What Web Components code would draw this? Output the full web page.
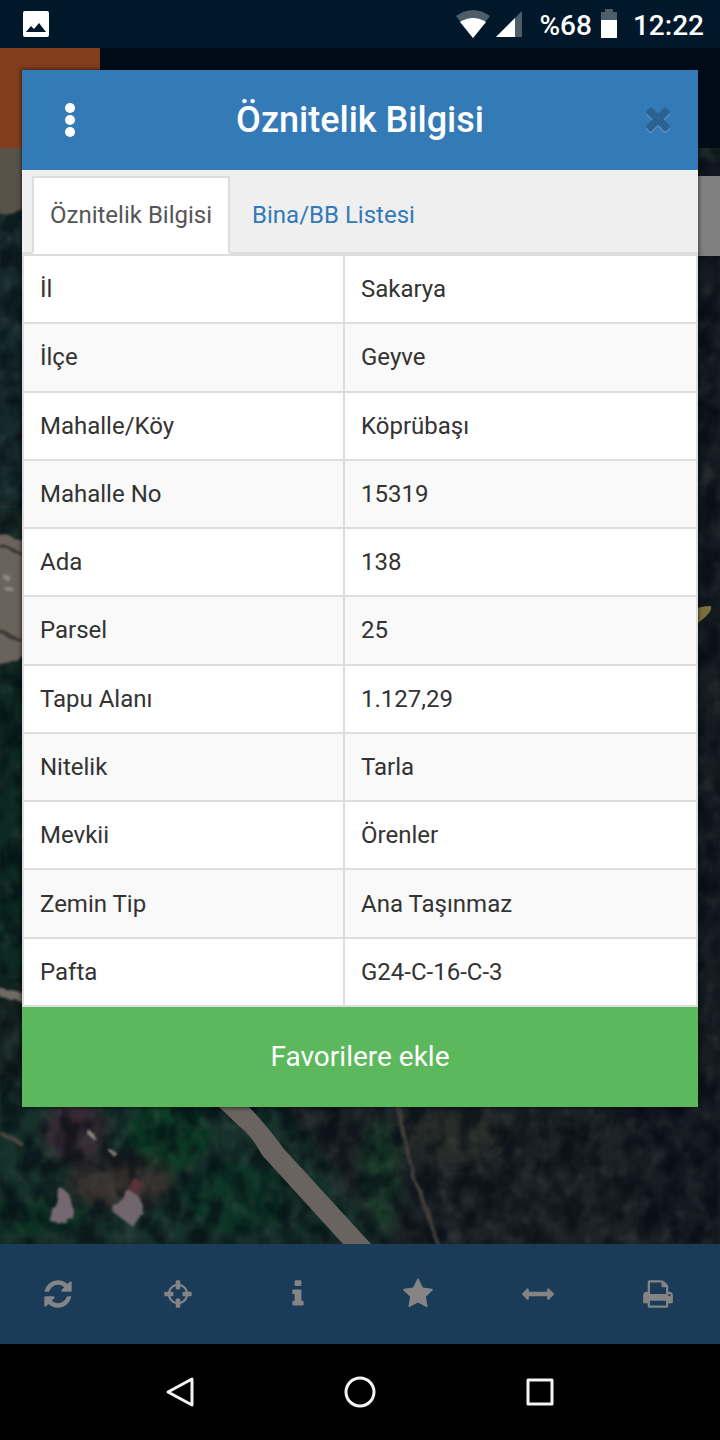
<!DOCTYPE html>
<html lang="tr">
<head>
<meta charset="utf-8">
<meta name="viewport" content="width=device-width, initial-scale=1">
<title>Parsel Sorgu</title>
<style>
  html, body { margin: 0; }
  body { font-family: Roboto, "Noto Sans", sans-serif; background: #000; }
</style>
</head>
<body>
<parcel-screen>
  <status-bar slot="status"></status-bar>
  <app-header slot="header"></app-header>
  <satellite-map slot="map"></satellite-map>
  <tool-bar slot="tools"></tool-bar>
  <system-nav slot="nav"></system-nav>
  <info-dialog slot="dialog" heading="Öznitelik Bilgisi">
    <tab-strip></tab-strip>
    <attribute-table></attribute-table>
    <favorite-button>Favorilere ekle</favorite-button>
  </info-dialog>
</parcel-screen>

<script>
const define = (name, html, setup) => {
  const template = document.createElement('template');
  template.innerHTML = html;
  customElements.define(name, class extends HTMLElement {
    constructor() {
      super();
      this.attachShadow({ mode: 'open' }).append(template.content.cloneNode(true));
    }
    connectedCallback() { if (setup) setup(this, this.shadowRoot); }
  });
};

/* Icon outlines on a 1792-unit square */
const ICONS = {
  refresh: 'M1639 1056q0 5-1 7-64 268-268 434.5t-478 166.5q-146 0-282.5-55t-243.5-157l-129 129q-19 19-45 19t-45-19-19-45v-448q0-26 19-45t45-19h448q26 0 45 19t19 45-19 45l-137 137q71 66 161 102t187 36q134 0 250-65t186-179q11-17 53-117 8-23 30-23h192q13 0 22.5 9.5t9.5 22.5zm25-800v448q0 26-19 45t-45 19h-448q-26 0-45-19t-19-45 19-45l138-138q-148-137-349-137-134 0-250 65t-186 179q-11 17-53 117-8 23-30 23h-199q-13 0-22.5-9.5t-9.5-22.5v-7q65-268 270-434.5t480-166.5q146 0 284 55.5t245 156.5l130-129q19-19 45-19t45 19 19 45z',
  crosshairs: 'M1325 1024h-109q-26 0-45-19t-19-45v-128q0-26 19-45t45-19h109q-32-108-112.5-188.5t-188.5-112.5v109q0 26-19 45t-45 19h-128q-26 0-45-19t-19-45v-109q-108 32-188.5 112.5t-112.5 188.5h109q26 0 45 19t19 45v128q0 26-19 45t-45 19h-109q32 108 112.5 188.5t188.5 112.5v-109q0-26 19-45t45-19h128q26 0 45 19t19 45v109q108-32 188.5-112.5t112.5-188.5zm339-192v128q0 26-19 45t-45 19h-143q-37 161-154.5 278.5t-278.5 154.5v143q0 26-19 45t-45 19h-128q-26 0-45-19t-19-45v-143q-161-37-278.5-154.5t-154.5-278.5h-143q-26 0-45-19t-19-45v-128q0-26 19-45t45-19h143q37-161 154.5-278.5t278.5-154.5v-143q0-26 19-45t45-19h128q26 0 45 19t19 45v143q161 37 278.5 154.5t154.5 278.5h143q26 0 45 19t19 45z',
  info: 'M1216 1344v128q0 26-19 45t-45 19h-512q-26 0-45-19t-19-45v-128q0-26 19-45t45-19h64v-384h-64q-26 0-45-19t-19-45v-128q0-26 19-45t45-19h384q26 0 45 19t19 45v576h64q26 0 45 19t19 45zm-128-1152v192q0 26-19 45t-45 19h-256q-26 0-45-19t-19-45v-192q0-26 19-45t45-19h256q26 0 45 19t19 45z',
  star: 'M1728 647q0 22-26 48l-363 354 86 500q1 7 1 20 0 21-10.5 35.5t-30.5 14.5q-19 0-40-12l-449-236-449 236q-22 12-40 12-21 0-31.5-14.5t-10.5-35.5q0-6 2-20l86-500-364-354q-25-27-25-48 0-37 56-46l502-73 225-455q19-41 49-41t49 41l225 455 502 73q56 9 56 46z',
  measure: 'M1792 896q0 26-19 45l-256 256q-19 19-45 19t-45-19-19-45v-128h-1024v128q0 26-19 45t-45 19-45-19l-256-256q-19-19-19-45t19-45l256-256q19-19 45-19t45 19 19 45v128h1024v-128q0-26 19-45t45-19 45 19l256 256q19 19 19 45z',
  print: 'M448 1536h896v-256h-896v256zm0-640h896v-384h-160q-40 0-68-28t-28-68v-160h-640v640zm1152 64q0-26-19-45t-45-19-45 19-19 45 19 45 45 19 45-19 19-45zm128 0v416q0 13-9.5 22.5t-22.5 9.5h-224v160q0 40-28 68t-68 28h-960q-40 0-68-28t-28-68v-160h-224q-13 0-22.5-9.5t-9.5-22.5v-416q0-79 56.5-135.5t135.5-56.5h64v-544q0-40 28-68t68-28h672q40 0 88 20t76 48l152 152q28 28 48 76t20 88v256h64q79 0 135.5 56.5t56.5 135.5z',
  times: 'M1490 1322q0 40-28 68l-136 136q-28 28-68 28t-68-28l-294-294-294 294q-28 28-68 28t-68-28l-136-136q-28-28-28-68t28-68l294-294-294-294q-28-28-28-68t28-68l136-136q28-28 68-28t68 28l294 294 294-294q28-28 68-28t68 28l136 136q28 28 28 68t-28 68l-294 294 294 294q28 28 28 68z'
};

define('glyph-icon', `
  <style>
    :host { display: block; width: 32px; height: 32px; }
    svg { display: block; width: 100%; height: 100%; overflow: visible; }
  </style>
  <svg viewBox="0 0 1792 1792" fill="currentColor" aria-hidden="true"><path/></svg>`,
  (el, root) => root.querySelector('path').setAttribute('d', ICONS[el.getAttribute('name')]));

define('parcel-screen', `
  <style>
    :host { display: grid; grid-template-rows: 48px 100px 1fr 100px 96px; position: relative; min-height: 100vh; }
    .overlay { position: absolute; top: 70px; left: 22px; right: 22px; }
  </style>
  <slot name="status"></slot>
  <slot name="header"></slot>
  <slot name="map"></slot>
  <slot name="tools"></slot>
  <slot name="nav"></slot>
  <div class="overlay"><slot name="dialog"></slot></div>`);

define('status-bar', `
  <style>
    :host { display: flex; align-items: center; padding: 0 16px 0 22px; background: #00182a; color: #fff; font-size: 28px; font-weight: 500; line-height: 32px; }
    svg { display: block; flex: none; }
    span, time { padding-top: 4px; }
    .fill { flex: 1; }
    .signal { margin: 0 18px 0 6px; }
    .battery { margin: 0 16px 0 9px; }
  </style>
  <svg width="28" height="28" viewBox="0 0 28 28"><rect x="1" y="1" width="26" height="26" rx="2" fill="#fff"/><path d="M4 22l5-6 3 3 5-6 7 9z" fill="#00182a"/></svg>
  <span class="fill"></span>
  <svg width="34" height="30" viewBox="0 0 34 30"><path d="M0 7Q17-5 34 7L17 29z" fill="#4d5d6a"/><path d="M4 13Q17 5 30 13L17 29z" fill="#fff"/></svg>
  <svg class="signal" width="26" height="28" viewBox="0 0 26 28"><path d="M26 1V27H0z" fill="#4d5d6a"/><path d="M19 8V27H0z" fill="#fff"/></svg>
  <span>%68</span>
  <svg class="battery" width="16" height="30" viewBox="0 0 16 30"><path d="M0 3h4V0h8v3h4v8H0z" fill="#4d5d6a"/><path d="M0 11h16v18H0z" fill="#fff"/></svg>
  <time>12:22</time>`);

define('app-header', `
  <style>
    :host { display: flex; background: #000d18; }
    .brand { width: 100px; background: #843d1d; }
  </style>
  <div class="brand"></div>`);

define('satellite-map', `
  <style>
    :host { display: grid; position: relative; overflow: hidden; background: #10201f; min-height: 1096px; }
    svg { display: block; width: 100%; height: 100%; }
    button { position: absolute; top: 28px; right: 0; width: 80px; height: 80px; border: 0; background: #808080; }
  </style>
  <svg viewBox="0 0 720 1096" preserveAspectRatio="xMidYMid slice" aria-hidden="true">
    <defs>
      <filter id="soft" x="-30%" y="-30%" width="160%" height="160%"><feGaussianBlur stdDeviation="7"/></filter>
      <filter id="edge" x="-30%" y="-30%" width="160%" height="160%">
        <feTurbulence type="fractalNoise" baseFrequency=".08" numOctaves="2" seed="4" result="n"/>
        <feDisplacementMap in="SourceGraphic" in2="n" scale="10"/><feGaussianBlur stdDeviation="1"/>
      </filter>
      <filter id="shade" x="0" y="0" width="100%" height="100%" color-interpolation-filters="sRGB">
        <feTurbulence type="fractalNoise" baseFrequency=".05 .04" numOctaves="3" seed="8"/>
        <feColorMatrix values="0 0 0 0 0  0 0 0 0 .03  0 0 0 0 .06  3 0 0 0 -1.1"/>
        <feGaussianBlur stdDeviation="1"/>
      </filter>
      <filter id="leaf" x="0" y="0" width="100%" height="100%" color-interpolation-filters="sRGB">
        <feTurbulence type="fractalNoise" baseFrequency=".08 .06" numOctaves="3" seed="21"/>
        <feColorMatrix values="0 0 0 0 .28  0 0 0 0 .32  0 0 0 0 .32  0 3 0 0 -1.4"/>
        <feGaussianBlur stdDeviation="1"/>
      </filter>
    </defs>
    <rect width="720" height="1096" fill="#172824"/>
    <g filter="url(#soft)">
      <rect x="-20" y="75" width="60" height="280" fill="#152b2d"/>
      <rect x="-20" y="530" width="60" height="300" fill="#0d2b20"/>
      <path d="M-20 940h290l110 160H-20z" fill="#14332a"/>
      <path d="M270 940h450v160H390z" fill="#1d2225"/>
      <path d="M600 0h130v1096H640z" fill="#131a21"/>
      <ellipse cx="75" cy="985" rx="30" ry="30" fill="#382b34"/>
      <ellipse cx="120" cy="1035" rx="50" ry="26" fill="#37332f"/>
      <ellipse cx="170" cy="985" rx="40" ry="34" fill="#0f3d28"/>
      <ellipse cx="235" cy="1050" rx="50" ry="36" fill="#0d3625"/>
      <ellipse cx="25" cy="1070" rx="60" ry="16" fill="#0e3124"/>
      <ellipse cx="380" cy="1030" rx="18" ry="60" fill="#1a3c2b"/>
      <ellipse cx="455" cy="985" rx="50" ry="30" fill="#2b2e2a"/>
    </g>
    <rect width="720" height="1096" filter="url(#leaf)" opacity=".3"/>
    <rect width="720" height="1096" filter="url(#shade)" opacity=".6"/>
    <g filter="url(#edge)">
      <path d="M-20-20h60v55l-18 28-42 10z" fill="#595349"/>
      <path d="M-20 382l60 14v112l-60 12z" fill="#6b635b"/>
      <path d="M0 398l24 8M0 484l24 10" stroke="#3b3834" stroke-width="4"/>
      <path d="M3 428l8 4M5 440l8 2" stroke="#8d8881" stroke-width="4"/>
      <path d="M0 844l30 8" stroke="#716b62" stroke-width="9"/>
      <path d="M398 955q8 60 26 100l14 44" stroke="#403d39" stroke-width="4" fill="none"/>
      <path d="M0 984l22 12" stroke="#4b4641" stroke-width="4"/>
      <path d="M50 1074l2-13 8-22 10 8 4 16-14 14z" fill="#746870"/>
      <path d="M112 1063l16-20 10 4 4 18-9 14z" fill="#71666c"/>
      <path d="M129 1042l7-12 8 6-6 12z" fill="#593138"/>
      <path d="M88 984l8 7M112 1004l4 3" stroke="#8b877f" stroke-width="4"/>
    </g>
    <path d="M218 958L248 958Q264 974 284 1001L371 1096H343L262 1007Q252 988 239 978z" fill="#69645f"/>
    <path d="M690 463q10-5 21-5 1 4-3 8-7 8-18 14z" fill="#78713f"/>
  </svg>
  <button type="button" aria-label="Katmanlar"></button>`);

define('tool-bar', `
  <style>
    :host { display: grid; grid-template-columns: repeat(6, 1fr); background: #1b3c59; }
    button { display: grid; place-items: center; border: 0; background: none; color: #848484; padding: 0 4px 0 0; }
  </style>
  <button type="button" aria-label="Yenile"><glyph-icon name="refresh"></glyph-icon></button>
  <button type="button" aria-label="Konum"><glyph-icon name="crosshairs"></glyph-icon></button>
  <button type="button" aria-label="Bilgi"><glyph-icon name="info"></glyph-icon></button>
  <button type="button" aria-label="Favoriler"><glyph-icon name="star"></glyph-icon></button>
  <button type="button" aria-label="Ölçüm"><glyph-icon name="measure"></glyph-icon></button>
  <button type="button" aria-label="Yazdır"><glyph-icon name="print"></glyph-icon></button>`);

define('system-nav', `
  <style>
    :host { display: grid; grid-template-columns: repeat(3, 25%); justify-content: center; background: #000; }
    button { display: grid; place-items: center; border: 0; padding: 0; background: none; }
    svg { display: block; fill: none; stroke: #f4f4f4; stroke-width: 3; stroke-linejoin: round; }
  </style>
  <button type="button" aria-label="Geri"><svg width="32" height="32" viewBox="0 0 32 32"><path d="M28 3v26L4 16z"/></svg></button>
  <button type="button" aria-label="Ana ekran"><svg width="32" height="32" viewBox="0 0 32 32"><circle cx="16" cy="16" r="14"/></svg></button>
  <button type="button" aria-label="Son uygulamalar"><svg width="32" height="32" viewBox="0 0 32 32"><rect x="4" y="4" width="24" height="24"/></svg></button>`);

define('info-dialog', `
  <style>
    :host { display: block; background: #fff; box-shadow: 0 0 4px 1px rgba(0, 0, 0, .5); }
    header { display: grid; grid-template-columns: 96px 1fr 96px; align-items: center; height: 100px; background: #347ab7; color: #fff; }
    h1 { margin: 0; font-size: 36px; font-weight: 500; line-height: 48px; text-align: center; }
    button { display: grid; place-items: center; height: 64px; border: 0; padding: 0; background: none; color: #fff; }
    .close { padding: 0 0 4px 16px; color: #2a6292; }
    .close glyph-icon { width: 36px; height: 36px; filter: drop-shadow(0 2px 0 #5590c3); }
  </style>
  <section role="dialog" aria-labelledby="heading">
    <header>
      <button type="button" aria-label="Menü"><svg width="12" height="36" viewBox="0 0 12 36" fill="#fff"><circle cx="6" cy="6" r="5"/><circle cx="6" cy="18" r="5"/><circle cx="6" cy="30" r="5"/></svg></button>
      <h1 id="heading"></h1>
      <button type="button" class="close" aria-label="Kapat"><glyph-icon name="times"></glyph-icon></button>
    </header>
    <slot></slot>
  </section>`,
  (el, root) => { root.querySelector('h1').textContent = el.getAttribute('heading'); });

define('tab-strip', `
  <style>
    :host { display: block; background: #efefef; }
    nav { display: flex; gap: 4px; padding: 6px 10px 0; border-bottom: 2px solid #ddd; }
    a { box-sizing: border-box; height: 76px; padding: 20px 16px; border: 2px solid transparent; color: #337ab7; font-size: 24px; line-height: 34px; text-decoration: none; }
    a[aria-current] { height: 78px; margin-bottom: -2px; background: #fff; border-color: #ddd #ddd #fff; color: #555; }
  </style>
  <nav><a href="#oznitelik" aria-current="page">Öznitelik Bilgisi</a><a href="#bina">Bina/BB Listesi</a></nav>`);

const ROWS = [
  ['İl', 'Sakarya'], ['İlçe', 'Geyve'], ['Mahalle/Köy', 'Köprübaşı'], ['Mahalle No', '15319'],
  ['Ada', '138'], ['Parsel', '25'], ['Tapu Alanı', '1.127,29'], ['Nitelik', 'Tarla'],
  ['Mevkii', 'Örenler'], ['Zemin Tip', 'Ana Taşınmaz'], ['Pafta', 'G24-C-16-C-3']
];

define('attribute-table', `
  <style>
    :host { display: block; }
    table { width: 100%; height: 753px; border-collapse: collapse; table-layout: fixed; color: #333; font-size: 24px; line-height: 34px; }
    th, td { padding: 0 16px; border: 2px solid #ddd; font-weight: 400; text-align: left; }
    th { width: 287px; }
    tr:nth-child(even) { background: #f9f9f9; }
  </style>
  <table><tbody></tbody></table>`,
  (el, root) => {
    const body = root.querySelector('tbody');
    for (const [name, value] of ROWS) {
      const row = body.insertRow();
      const head = document.createElement('th');
      head.scope = 'row';
      head.textContent = name;
      row.append(head);
      row.insertCell().textContent = value;
    }
  });

define('favorite-button', `
  <style>
    :host { display: block; }
    button { display: block; width: 100%; height: 100px; border: 0; padding: 0; background: #5cb85c; color: #fff; font: inherit; font-size: 28px; line-height: 40px; }
  </style>
  <button type="button"><slot></slot></button>`);
</script>
</body>
</html>
